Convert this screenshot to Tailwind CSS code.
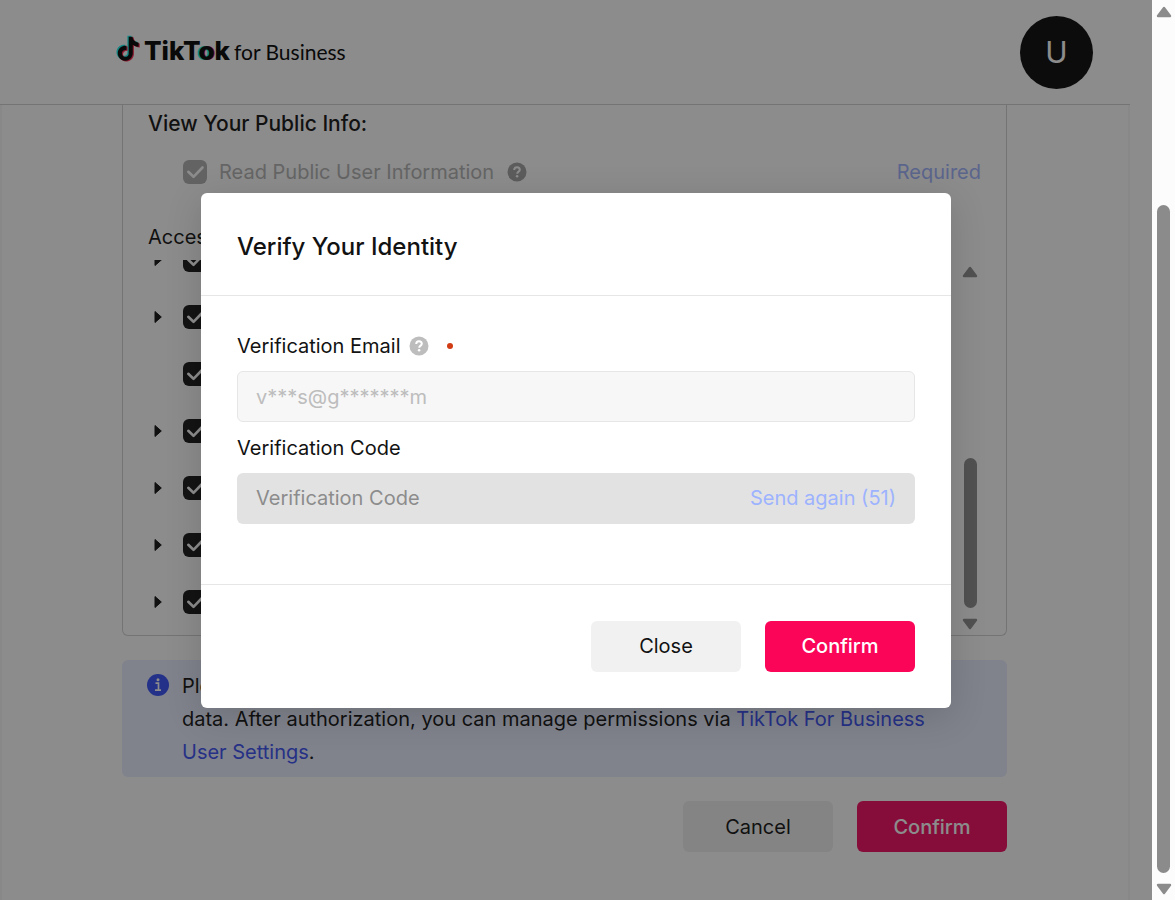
<!DOCTYPE html>
<html lang="en">
<head>
<meta charset="utf-8">
<title>TikTok for Business</title>
<script src="https://cdn.jsdelivr.net/npm/@tailwindcss/browser@4"></script>
</head>
<body class="flex h-screen overflow-hidden bg-white font-['Inter','Liberation_Sans',sans-serif] text-[20px] leading-[33px] text-[#1f1f1f]">
<svg class="hidden">
  <symbol id="note" viewBox="-1 -1 26 26"><path d="M12.525.02c1.31-.02 2.61-.01 3.91-.02.08 1.53.63 3.09 1.75 4.17 1.12 1.11 2.7 1.62 4.24 1.79v4.03c-1.44-.05-2.89-.35-4.2-.97-.57-.26-1.1-.59-1.62-.93-.01 2.92.01 5.84-.02 8.75-.08 1.4-.54 2.79-1.35 3.94-1.31 1.92-3.58 3.17-5.91 3.21-1.43.08-2.86-.31-4.08-1.03-2.02-1.19-3.44-3.37-3.65-5.71-.02-.5-.03-1-.01-1.49.18-1.9 1.12-3.72 2.58-4.96 1.66-1.44 3.98-2.13 6.15-1.72.02 1.48-.04 2.96-.04 4.44-.99-.32-2.15-.23-3.02.37-.63.41-1.11 1.04-1.36 1.75-.21.51-.15 1.07-.14 1.61.24 1.64 1.82 3.02 3.5 2.87 1.12-.01 2.19-.66 2.77-1.61.19-.33.4-.67.41-1.06.1-1.79.06-3.57.07-5.36.01-4.03-.01-8.05.02-12.07z"/></symbol>
  <symbol id="tick" viewBox="0 0 24 24"><path d="M5.300 11.800l5.200 5 9-9.300" fill="none" stroke="currentColor" stroke-width="2.600" stroke-linecap="round" stroke-linejoin="round"/></symbol>
  <symbol id="help" viewBox="0 0 20 20"><circle cx="10" cy="10" r="9.500" fill="currentColor"/><path d="M7.200 8.100C7.200 6.300 8.400 5.200 10 5.200s2.800 1 2.800 2.500c0 1.900-2.600 2-2.600 4" fill="none" stroke="#fff" stroke-width="2"/><circle cx="10.100" cy="14.300" r="1.300" fill="#fff"/></symbol>
  <symbol id="up" viewBox="0 0 16 12"><path d="M8 2L14 10H2z" fill="currentColor" stroke="currentColor" stroke-width="2.400" stroke-linejoin="round"/></symbol>
  <symbol id="right" viewBox="0 0 8 14"><path d="M1 1.500L7.300 7L1 12.500z" fill="currentColor" stroke="currentColor" stroke-width="1" stroke-linejoin="round"/></symbol>
</svg>

<div class="relative flex h-screen min-w-0 flex-1 flex-col overflow-hidden">
  <div class="mr-[22px] flex flex-1 flex-col">
    <header class="flex h-[105px] shrink-0 items-center justify-between border-b border-[#d4d4d4] pr-[37px] pl-[115px]">
      <a href="#" class="flex items-center pb-1 text-[#111]">
        <svg viewBox="0 0 26 30" class="mr-[3px] mb-[5px] h-[30px] w-[26px]">
          <use href="#note" x="-1.100" y="0.700" width="26" height="28" fill="#25f4ee"/>
          <use href="#note" x="1.300" y="2.500" width="26" height="28" fill="#fe2c55"/>
          <use href="#note" x="0.200" y="1.700" width="26" height="28" fill="#111"/>
        </svg>
        <span class="text-[26px] font-extrabold">TikT<span class="[text-shadow:-2px_0_#25f4ee,1px_0_#fe2c55]">o</span>k</span>
        <span class="ml-1 pt-[2px] font-['Lato',sans-serif] text-[21px]">for Business</span>
      </a>
      <button type="button" aria-label="Account" class="flex size-[73px] items-center justify-center rounded-full bg-[#171717] text-[30px] text-white">U</button>
    </header>

    <main class="flex-1 border-r-2 border-l-2 border-[#f8f8f8] pr-px">
      <div class="mx-auto w-[885px] max-w-full">
        <section class="flex flex-col rounded-b-md border border-t-0 border-[#d4d4d4] px-[25px] pt-[2px] pb-1">
          <h2 class="text-[21px] font-medium">View Your Public Info:</h2>
          <div class="mt-[15px] flex items-center pl-[35px] text-[#b8b8b8]">
            <span class="grid size-6 shrink-0">
              <input id="read-info" type="checkbox" checked disabled class="size-6 appearance-none rounded-md bg-[#b4b4b4] [grid-area:1/1]">
              <svg class="pointer-events-none size-6 text-white [grid-area:1/1]"><use href="#tick"/></svg>
            </span>
            <label for="read-info" class="ml-3 pt-px">Read Public User Information</label>
            <svg class="ml-[13px] size-5 text-[#a8a8a8]"><use href="#help"/></svg>
            <span class="ml-auto pt-px text-[#a6b8ff]">Required</span>
          </div>
          <h2 class="mt-8">Access</h2>
          <div class="mt-[6px] flex h-[371px]">
            <ul id="permissions" class="flex flex-1 flex-col justify-end overflow-hidden pb-px"></ul>
            <div class="flex w-[22px] flex-col items-center pt-[6px] pb-[1px] text-[#949494]">
              <svg class="h-3 w-4"><use href="#up"/></svg>
              <div class="mt-auto mb-[10px] h-[150px] w-[13px] rounded-full bg-current"></div>
              <svg class="h-3 w-4 rotate-180"><use href="#up"/></svg>
            </div>
          </div>
        </section>

        <section class="mt-6 flex rounded-md bg-[#e9eeff] px-[25px] pt-[10px] pb-2">
          <svg viewBox="0 0 22 22" class="mt-1 mr-[13px] size-[22px] shrink-0"><circle cx="11" cy="11" r="11" fill="#4059f8"/><circle cx="11" cy="5.800" r="1.500" fill="#fff"/><path d="M8.500 9.200H11.500V16M8 16.200H14" fill="none" stroke="#fff" stroke-width="1.700"/></svg>
          <p>Please<br>data. After authorization, you can manage permissions via <a href="#" class="text-[#465af5]">TikTok For Business<br>User Settings</a>.</p>
        </section>

        <div class="mt-6 flex justify-end gap-6">
          <button type="button" class="h-[51px] w-[150px] rounded-md bg-[#f1f1f1] pt-px">Cancel</button>
          <button type="button" class="h-[51px] w-[150px] rounded-md bg-[#f4196a] pt-px font-medium text-white">Confirm</button>
        </div>
      </div>
    </main>
  </div>

  <div class="absolute inset-0 flex items-center justify-center bg-black/45">
    <div role="dialog" aria-modal="true" aria-labelledby="dialog-title" class="w-[750px] max-w-full rounded-md bg-white text-[#121212] shadow-[0_8px_36px_rgba(0,0,0,0.15)]">
      <div class="border-b border-[#e6e6e6] px-9 pt-[37px] pb-8">
        <h1 id="dialog-title" class="text-[24px] font-medium">Verify Your Identity</h1>
      </div>
      <form class="px-9 pt-[34px] pb-[60px]">
        <div class="flex items-center">
          <label for="email">Verification Email</label>
          <svg class="ml-[8px] size-5 text-[#bdbdbd]"><use href="#help"/></svg>
          <span class="ml-[18px] size-[6px] rounded-full bg-[#d13c14]"></span>
        </div>
        <input id="email" type="text" disabled value="v***s@g*******m" class="mt-2 block h-[51px] w-full rounded-md border border-[#e6e6e6] bg-[#f7f7f7] px-[18px] pt-px text-[#bdbdbd]">
        <label for="code" class="mt-[10px] block">Verification Code</label>
        <div class="mt-2 flex h-[51px] items-center rounded-md bg-[#e2e2e2] px-[19px] pt-px">
          <input id="code" type="text" placeholder="Verification Code" class="min-w-0 flex-1 bg-transparent outline-none placeholder:text-[#8c8c8c]">
          <button type="button" disabled class="text-[#9db3ff]">Send again (51)</button>
        </div>
      </form>
      <div class="flex justify-end gap-6 border-t border-[#e6e6e6] p-9">
        <button type="button" class="h-[51px] w-[150px] rounded-md bg-[#f1f1f1] pt-px">Close</button>
        <button type="button" class="h-[51px] w-[150px] rounded-md bg-[#fb0558] pt-px font-medium text-white">Confirm</button>
      </div>
    </div>
  </div>
</div>

<div class="flex w-[23px] flex-col items-center bg-[#fcfcfc] pt-[6px] pb-[5px] text-[#8b8b8b]">
  <svg class="h-3 w-4 shrink-0"><use href="#up"/></svg>
  <div class="mt-auto mb-[10px] h-[668px] w-[13px] rounded-full bg-current"></div>
  <svg class="h-3 w-4 shrink-0 rotate-180"><use href="#up"/></svg>
</div>

<script>
  const expandable = [true, true, false, true, true, true, true];
  document.getElementById('permissions').innerHTML = expandable.map((open, i) => `
    <li class="flex h-[57px] shrink-0 items-center pl-[6px]">
      <span class="flex w-[29px] items-center">${open ? '<button type="button" aria-label="Expand" class="block"><svg class="h-[14px] w-2"><use href="#right"/></svg></button>' : ''}</span>
      <span class="grid size-6">
        <input type="checkbox" checked aria-label="Permission ${i + 1}" class="size-6 appearance-none rounded-md bg-[#242424] [grid-area:1/1]">
        <svg class="pointer-events-none size-6 text-white [grid-area:1/1]"><use href="#tick"/></svg>
      </span>
    </li>`).join('');
</script>
</body>
</html>
